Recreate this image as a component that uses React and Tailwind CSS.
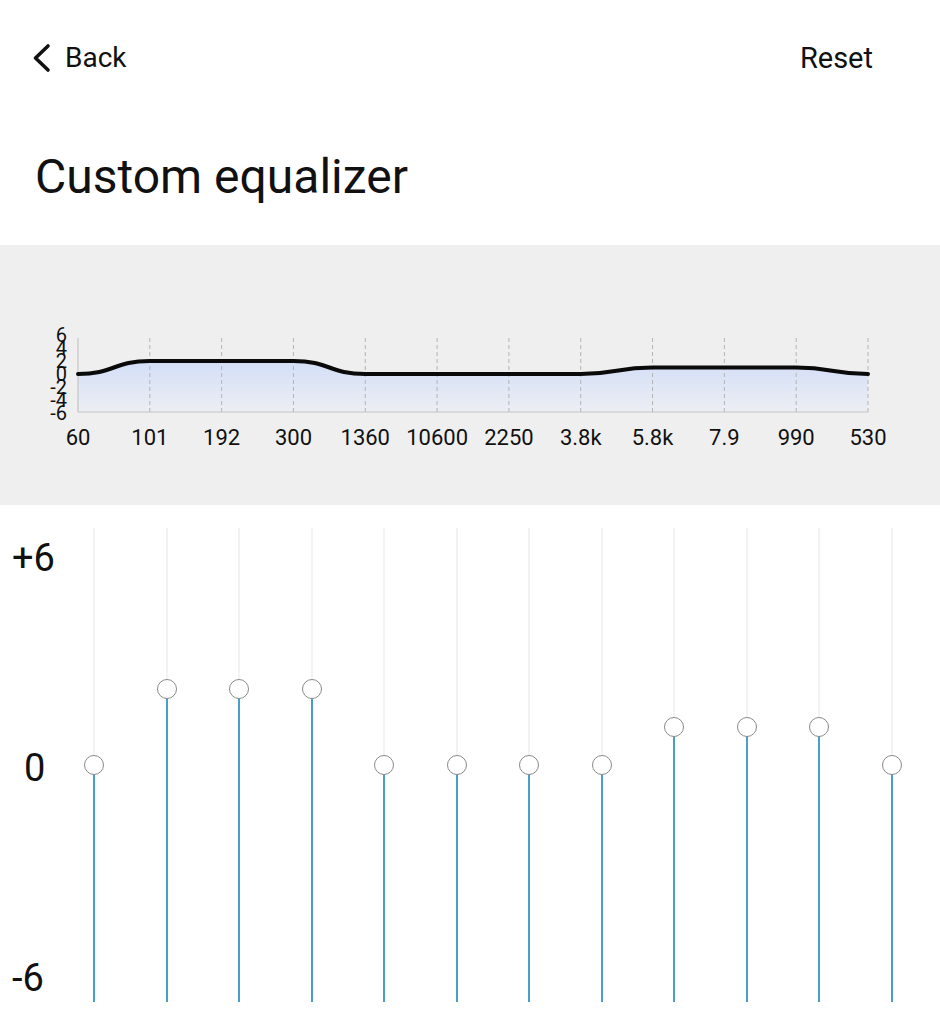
import React from "react";

const xLabels = ["60","101","192","300","1360","10600","2250","3.8k","5.8k","7.9","990","530"];
const values = [0,2,2,2,0,0,0,0,1,1,1,0];

function Chart() {
  const x0 = 78, step = 790 / 11;
  const zy = 129, unit = 6.5;
  const pts = values.map((v, i) => [x0 + step * i, zy - unit * v]);
  let d = `M ${pts[0][0]} ${pts[0][1]}`;
  for (let i = 1; i < pts.length; i++) {
    const [ax, ay] = pts[i - 1];
    const [bx, by] = pts[i];
    const h = (bx - ax) / 2;
    d += ` C ${ax + h} ${ay} ${bx - h} ${by} ${bx} ${by}`;
  }
  const last = pts[pts.length - 1];
  const fill = d + ` L ${last[0]} 167 L ${x0} 167 Z`;
  return (
    <svg width="940" height="260" viewBox="0 0 940 260" className="block">
      <defs>
        <linearGradient id="g" x1="0" y1="0" x2="0" y2="1">
          <stop offset="0%" stopColor="#d3def7" />
          <stop offset="100%" stopColor="#eceef3" />
        </linearGradient>
      </defs>
      <path d={fill} fill="url(#g)" />
      {xLabels.map((_, i) =>
        i > 0 ? (
          <line key={i} x1={x0 + step * i} y1="93" x2={x0 + step * i} y2="167" stroke="#b4b4b4" strokeWidth="1" strokeDasharray="4 3" />
        ) : null
      )}
      <line x1={x0} y1="93" x2={x0} y2="167" stroke="#c4c4c4" strokeWidth="1.2" />
      <line x1={x0} y1="167" x2={x0 + 790} y2="167" stroke="#c4c4c4" strokeWidth="1.2" />
      <path d={d} fill="none" stroke="#0a0a0a" strokeWidth="4" strokeLinecap="round" />
      {[6,4,2,0,-2,-4,-6].map((v) => (
        <text key={v} x="67" y={zy - unit * v + 7} textAnchor="end" fontFamily="Roboto, sans-serif" fontSize="20" fill="#111">{v}</text>
      ))}
      {xLabels.map((l, i) => (
        <text key={l} x={x0 + step * i} y="200" textAnchor="middle" fontFamily="Roboto, sans-serif" fontSize="22" fill="#111">{l}</text>
      ))}
    </svg>
  );
}

function Slider({ value }) {
  const center = 237 - 38 * value;
  return (
    <div className="relative flex-1 h-[474px]">
      <div className="absolute left-1/2 -translate-x-1/2 top-0 w-px bg-[#e8e8e8]" style={{ height: center }} />
      <div className="absolute left-1/2 -translate-x-1/2 bottom-0 w-[2px] bg-[#4a9fc9]" style={{ top: center }} />
      <div className="absolute left-1/2 -translate-x-1/2 -translate-y-1/2 w-[20px] h-[20px] rounded-full bg-white border-[1.5px] border-[#8a8a8a]" style={{ top: center }} />
    </div>
  );
}

export default function App() {
  return (
    <div className="w-[940px] h-[1024px] bg-white overflow-hidden text-[#111]" style={{ fontFamily: "Roboto, 'Noto Sans', sans-serif" }}>
      <div className="h-[116px] flex items-center justify-between pl-[32px] pr-[67px]">
        <div className="flex items-center gap-[14px]">
          <svg width="19" height="30" viewBox="0 0 19 30">
            <path d="M16 3 L3.5 15 L16 27" fill="none" stroke="#111" strokeWidth="3.6" strokeLinecap="round" strokeLinejoin="round" />
          </svg>
          <span className="text-[28px] leading-none">Back</span>
        </div>
        <span className="text-[29px] leading-none">Reset</span>
      </div>
      <div className="h-[129px] pl-[35px] pt-[32px]">
        <h1 className="text-[48px] leading-[58px] font-normal">Custom equalizer</h1>
      </div>
      <div className="h-[260px] bg-[#efefef]">
        <Chart />
      </div>
      <div className="flex pt-[23px]">
        <div className="w-[58px] flex flex-col pt-[8px] gap-[166px] text-[38px] leading-[44px]">
          <span className="ml-[12px]">+6</span>
          <span className="ml-[24px]">0</span>
          <span className="ml-[12px]">-6</span>
        </div>
        <div className="w-[870px] flex">
          {values.map((v, i) => (
            <Slider key={i} value={v} />
          ))}
        </div>
      </div>
    </div>
  );
}
